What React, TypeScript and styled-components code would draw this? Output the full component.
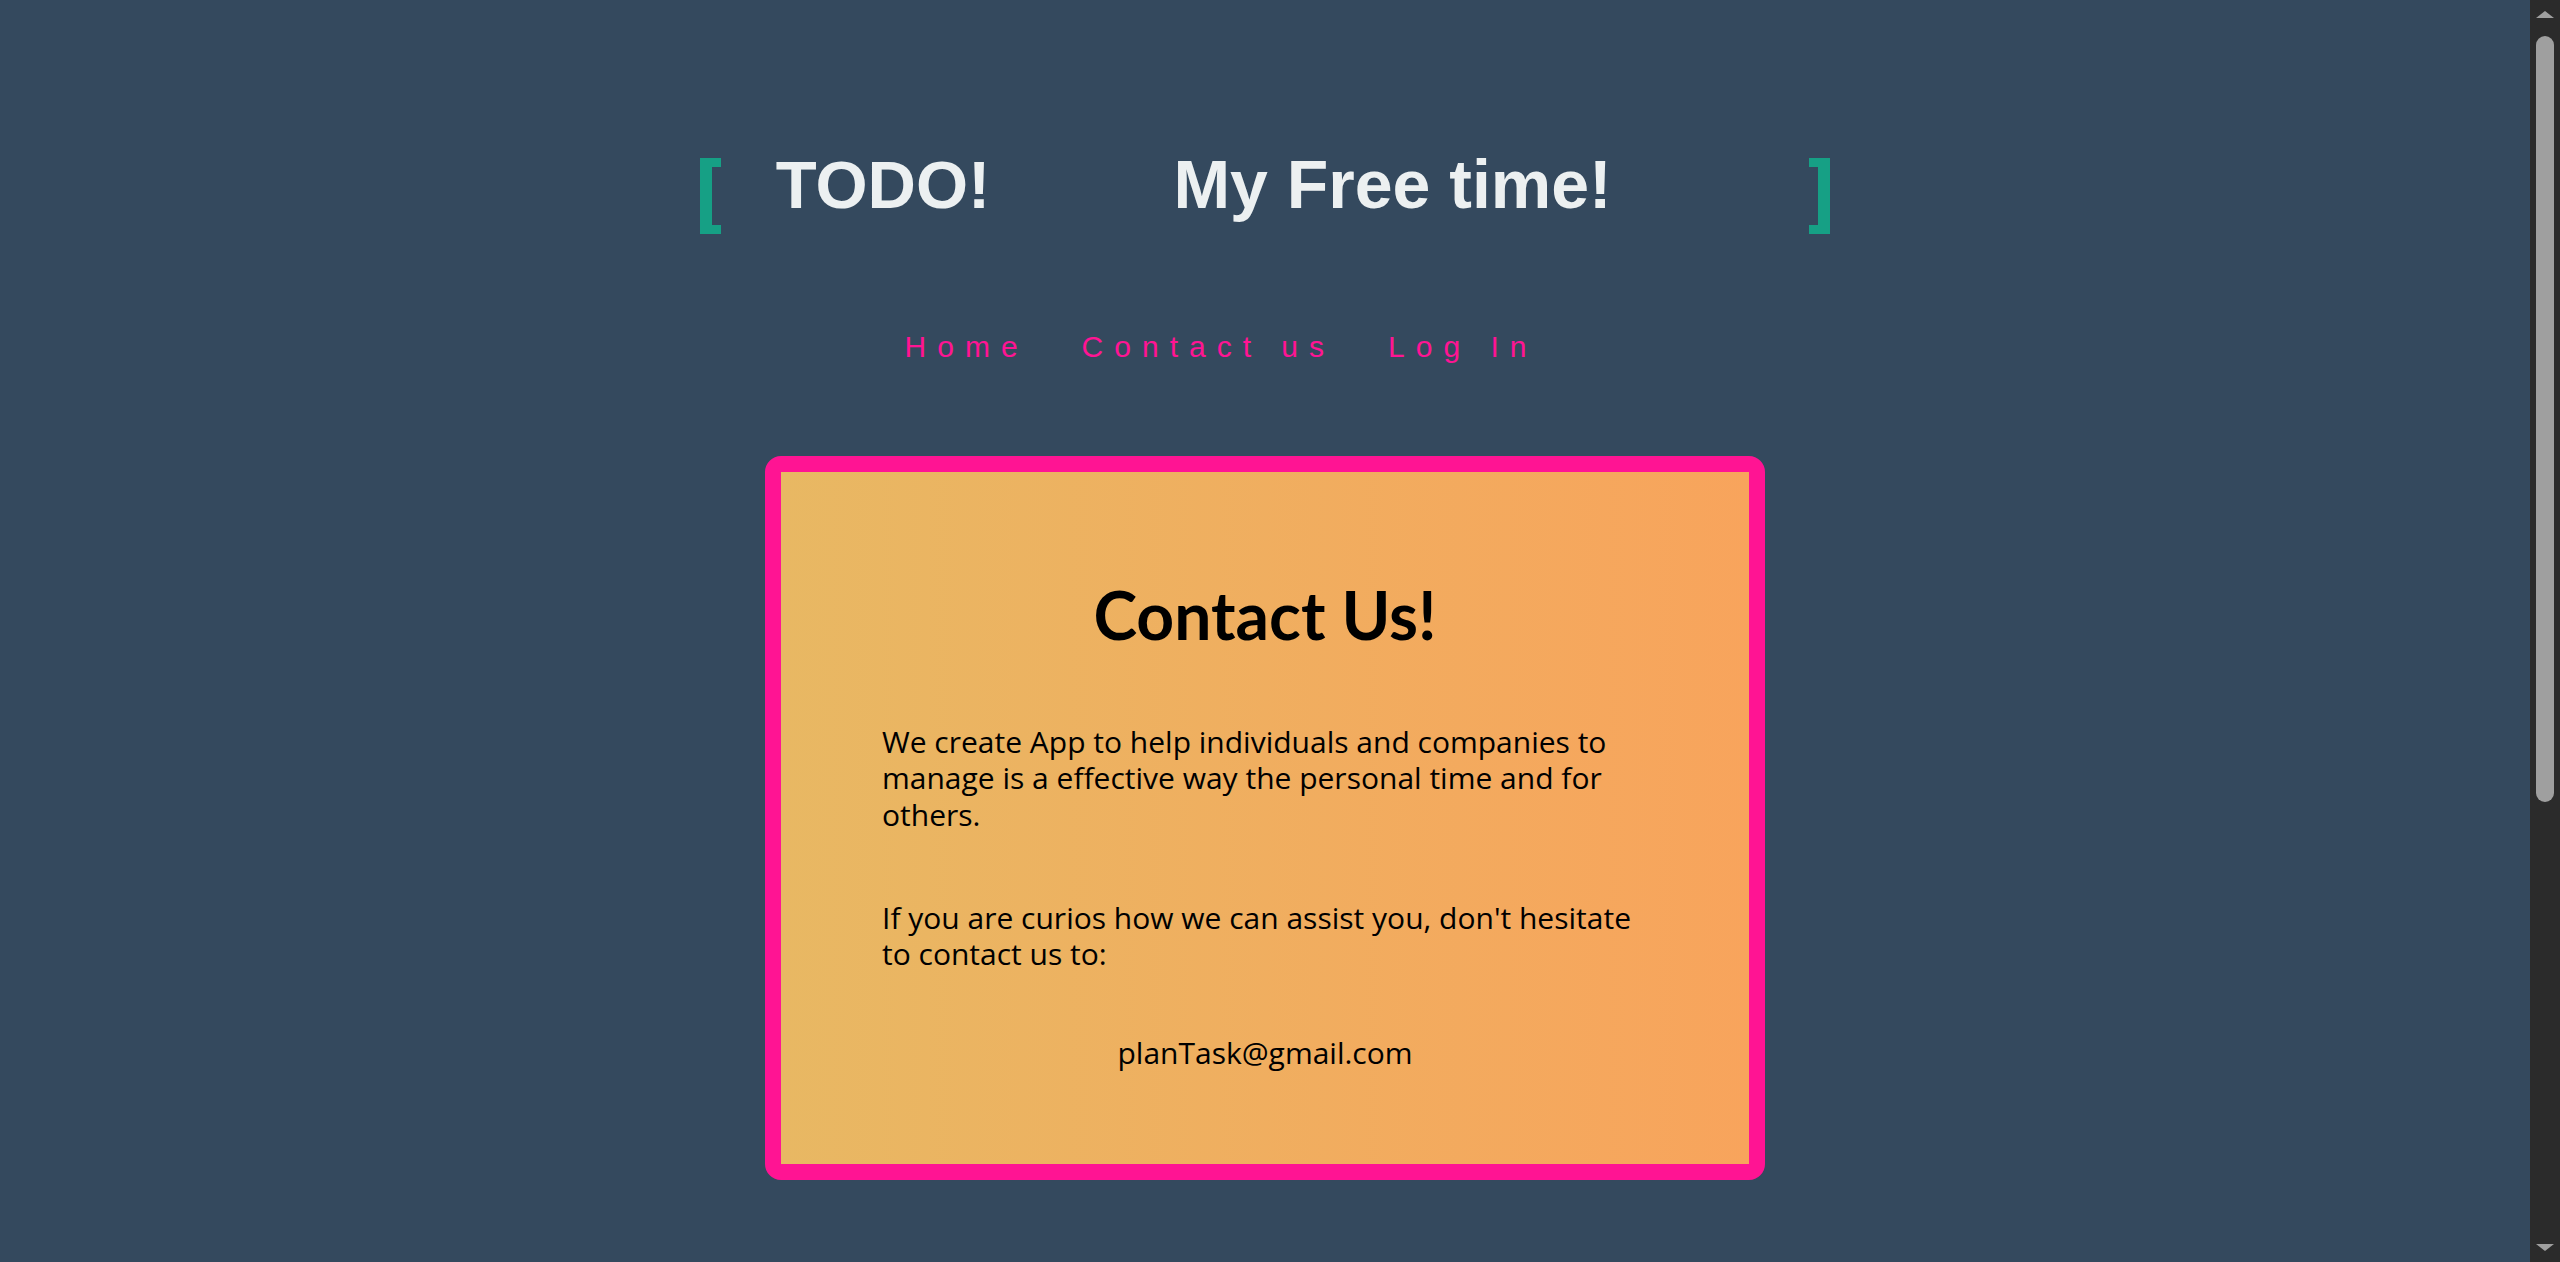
import React from "react";
import styled, { createGlobalStyle } from "styled-components";

const GlobalStyle = createGlobalStyle`
  html {
    background: #34495e;
  }
  body {
    margin: 0;
    background: #34495e;
    font-family: "Liberation Sans", Arial, sans-serif;
  }
  ::-webkit-scrollbar {
    width: 0;
    height: 0;
  }
`;

const Page = styled.div`
  min-height: 1980px;
  box-sizing: border-box;
  padding: 151px 30px 0 0;
  display: flex;
  flex-direction: column;
  align-items: center;
  background: #34495e;
`;

const Header = styled.header`
  display: flex;
  align-items: flex-start;
  justify-content: center;
`;

const Bracket = styled.span<{ $side: "left" | "right" }>`
  display: block;
  box-sizing: content-box;
  width: 9px;
  height: 58px;
  margin-top: 7px;
  border-top: 9px solid #16a085;
  border-bottom: 9px solid #16a085;
  border-${(p) => p.$side}: 12px solid #16a085;
`;

const HeadText = styled.h1<{ $before?: number; $after?: number; $size?: number }>`
  margin: 0 ${(p) => p.$after ?? 0}px 0 ${(p) => p.$before ?? 0}px;
  font-family: "Liberation Sans", Arial, sans-serif;
  font-weight: 700;
  font-size: ${(p) => p.$size ?? 67}px;
  line-height: 67px;
  color: #ecf0f1;
  white-space: nowrap;
`;

const Nav = styled.nav`
  margin-top: 98px;
  padding-right: 88px;
  display: flex;
  gap: 53px;
`;

const NavLink = styled.a`
  font-family: "Liberation Sans", Arial, sans-serif;
  font-size: 30px;
  line-height: 1;
  letter-spacing: 11px;
  color: #ff1493;
  text-decoration: none;
  white-space: nowrap;
  cursor: pointer;
`;

const Card = styled.section`
  margin-top: 94px;
  width: 1000px;
  box-sizing: border-box;
  border: 16px solid #ff1493;
  border-radius: 16px;
  background: linear-gradient(to right, #e8b863, #f8a45c);
  padding: 110px 101px 93px;
  color: #000;
  font-family: "Open Sans", "Noto Sans", sans-serif;
`;

const CardTitle = styled.h2`
  margin: 0;
  text-align: center;
  font-family: Lato, "Open Sans", sans-serif;
  font-weight: 700;
  font-size: 66px;
  line-height: 1;
`;

const Text = styled.p<{ $gap: number; $center?: boolean }>`
  margin: ${(p) => p.$gap}px 0 0;
  font-size: 30px;
  line-height: 36.5px;
  text-align: ${(p) => (p.$center ? "center" : "left")};
`;

const ScrollTrack = styled.div`
  position: fixed;
  top: 0;
  right: 0;
  width: 30px;
  height: 100vh;
  box-sizing: border-box;
  padding: 11px 0;
  background: #2b2b2b;
  display: flex;
  flex-direction: column;
  align-items: center;
`;

const ScrollArrow = styled.span<{ $dir: "up" | "down" }>`
  display: block;
  width: 0;
  height: 0;
  border-left: 9px solid transparent;
  border-right: 9px solid transparent;
  ${(p) =>
    p.$dir === "up"
      ? "border-bottom: 7px solid #9f9f9f;"
      : "border-top: 7px solid #9f9f9f; margin-top: auto;"}
`;

const ScrollThumb = styled.span`
  display: block;
  width: 18px;
  height: 766px;
  margin-top: 18px;
  border-radius: 9px;
  background: #9f9f9f;
`;

export default function App() {
  return (
    <>
      <GlobalStyle />
      <Page>
        <Header>
          <Bracket $side="left" />
          <HeadText $before={54.5} $after={183}>
            TODO!
          </HeadText>
          <HeadText $after={197} $size={68}>
            My Free time!
          </HeadText>
          <Bracket $side="right" />
        </Header>
        <Nav>
          <NavLink>Home</NavLink>
          <NavLink>Contact us</NavLink>
          <NavLink>Log In</NavLink>
        </Nav>
        <Card>
          <CardTitle>Contact Us!</CardTitle>
          <Text $gap={75.5}>
            We create App to help individuals and companies to manage is a
            effective way the personal time and for others.
          </Text>
          <Text $gap={66.5}>
            If you are curios how we can assist you, don't hesitate to contact
            us to:
          </Text>
          <Text $gap={62} $center>
            planTask@gmail.com
          </Text>
        </Card>
      </Page>
      <ScrollTrack aria-hidden="true">
        <ScrollArrow $dir="up" />
        <ScrollThumb />
        <ScrollArrow $dir="down" />
      </ScrollTrack>
    </>
  );
}
